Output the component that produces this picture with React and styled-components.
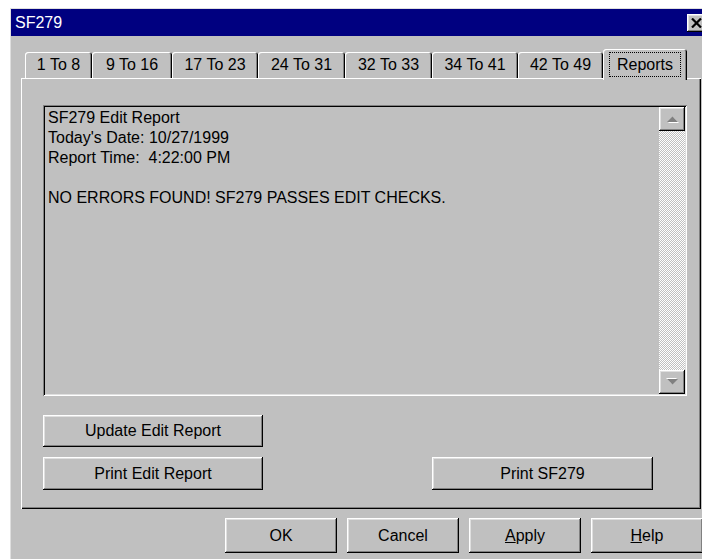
import React from 'react';
import styled, { createGlobalStyle } from 'styled-components';

const GlobalStyle = createGlobalStyle`
  html, body {
    margin: 0;
    padding: 0;
    background: #fff;
    overflow: hidden;
  }
  body {
    font-family: 'Liberation Sans', Arial, sans-serif;
    font-size: 16px;
    color: #000;
  }
`;

const raised = `
  box-shadow:
    inset -1px -1px #000,
    inset 1px 1px #fff,
    inset -2px -2px #808080,
    inset 2px 2px #dfdfdf;
`;

const sunken = `
  box-shadow:
    inset 1px 1px #808080,
    inset -1px -1px #fff,
    inset 2px 2px #000,
    inset -2px -2px #dfdfdf;
`;

const Window = styled.div`
  margin: 8px 0 0 10px;
  width: 694px;
  height: 560px;
  background: #c0c0c0;
  border-top: 1px solid #dfdfdf;
  border-left: 1px solid #dfdfdf;
  display: flex;
  flex-direction: column;
`;

const TitleBar = styled.div`
  height: 27px;
  background: #000080;
  color: #fff;
  display: flex;
  align-items: center;
  justify-content: space-between;
  padding-left: 4px;
  font-size: 16px;
`;

const CloseButton = styled.div`
  width: 18px;
  height: 18px;
  background: #c0c0c0;
  ${raised}
  display: flex;
  align-items: center;
  justify-content: center;
  margin-top: 1px;
`;

const Content = styled.div`
  padding: 13px 0 0 10px;
  display: flex;
  flex-direction: column;
`;

const TabStrip = styled.div`
  display: flex;
  align-items: flex-end;
  height: 29px;
  padding-left: 4px;
`;

const Tab = styled.div`
  position: relative;
  z-index: ${p => (p.$active ? 2 : 0)};
  width: ${p => p.$w}px;
  height: ${p => (p.$active ? 31 : 26)}px;
  margin-bottom: ${p => (p.$active ? -2 : 0)}px;
  box-sizing: border-box;
  background: #c0c0c0;
  border-radius: 3px 3px 0 0;
  box-shadow:
    inset 1px 1px #fff,
    inset -1px 0 #000,
    inset -2px 0 #808080;
  display: flex;
  align-items: ${p => (p.$active ? 'flex-start' : 'center')};
  justify-content: center;
  padding-top: ${p => (p.$active ? 3 : 0)}px;
  white-space: nowrap;
`;

const FocusLabel = styled.span`
  border: 1px dotted #000;
  padding: 2px 7px 2px 7px;
  line-height: 19px;
`;

const Panel = styled.div`
  width: 680px;
  height: 431px;
  box-sizing: border-box;
  padding: 27px 0 0 22px;
  box-shadow:
    inset 1px 1px #fff,
    inset -1px -1px #000,
    inset -2px -2px #808080;
  display: flex;
  flex-direction: column;
`;

const ReportBox = styled.div`
  width: 644px;
  height: 291px;
  box-sizing: border-box;
  ${sunken}
  display: flex;
  padding: 2px;
`;

const ReportText = styled.div`
  flex: 1;
  padding: 1px 3px;
  line-height: 20px;
  white-space: pre;
`;

const ScrollBar = styled.div`
  width: 26px;
  display: flex;
  flex-direction: column;
  background: repeating-conic-gradient(#c0c0c0 0 25%, #fff 0 50%) 0 0 / 2px 2px;
`;

const ScrollTrack = styled.div`
  flex: 1;
`;

const ScrollButton = styled.div`
  height: 24px;
  background: #c0c0c0;
  ${raised}
  display: flex;
  align-items: center;
  justify-content: center;
`;

const ButtonRow = styled.div`
  display: flex;
  gap: ${p => p.$gap || 0}px;
  margin-top: ${p => p.$top}px;
  padding-left: ${p => p.$left || 0}px;
`;

const Button = styled.div`
  width: ${p => p.$w}px;
  height: ${p => p.$h}px;
  box-sizing: border-box;
  background: #c0c0c0;
  ${raised}
  display: flex;
  align-items: center;
  justify-content: center;
  white-space: nowrap;
`;

// greyed-out scroll arrow with its white shadow
function Arrow({ down }) {
  return (
    <svg width="13" height="8" viewBox="0 0 13 8">
      <g transform={down ? 'rotate(180 6.5 4)' : undefined}>
        <path d="M1 7 L12 7 L6.5 1.5 Z" fill="#fff" transform="translate(1 1)" />
        <path d="M1 7 L12 7 L6.5 1.5 Z" fill="#808080" />
      </g>
    </svg>
  );
}

const tabs = [
  ['1 To 8', 67],
  ['9 To 16', 80],
  ['17 To 23', 86],
  ['24 To 31', 87],
  ['32 To 33', 87],
  ['34 To 41', 86],
  ['42 To 49', 85],
];

const report = `SF279 Edit Report
Today's Date: 10/27/1999
Report Time:  4:22:00 PM

NO ERRORS FOUND! SF279 PASSES EDIT CHECKS.`;

export default function App() {
  return (
    <>
      <GlobalStyle />
      <Window>
        <TitleBar>
          <span>SF279</span>
          <CloseButton>
            <svg width="11" height="10" viewBox="0 0 11 10">
              <path d="M1 0.5 L10 9.5 M10 0.5 L1 9.5" stroke="#000" strokeWidth="2.2" />
            </svg>
          </CloseButton>
        </TitleBar>
        <Content>
          <TabStrip>
            {tabs.map(([label, w]) => (
              <Tab key={label} $w={w}>{label}</Tab>
            ))}
            <Tab $active $w={84}>
              <FocusLabel>Reports</FocusLabel>
            </Tab>
          </TabStrip>
          <Panel>
            <ReportBox>
              <ReportText>{report}</ReportText>
              <ScrollBar>
                <ScrollButton><Arrow /></ScrollButton>
                <ScrollTrack />
                <ScrollButton><Arrow down /></ScrollButton>
              </ScrollBar>
            </ReportBox>
            <ButtonRow $top={19}>
              <Button $w={220} $h={32}>Update Edit Report</Button>
            </ButtonRow>
            <ButtonRow $top={10} $gap={169}>
              <Button $w={220} $h={33}>Print Edit Report</Button>
              <Button $w={221} $h={33}>Print SF279</Button>
            </ButtonRow>
          </Panel>
          <ButtonRow $top={9} $left={204} $gap={10}>
            <Button $w={112} $h={35}>OK</Button>
            <Button $w={112} $h={35}>Cancel</Button>
            <Button $w={112} $h={35}><span><u>A</u>pply</span></Button>
            <Button $w={112} $h={35}><span><u>H</u>elp</span></Button>
          </ButtonRow>
        </Content>
      </Window>
    </>
  );
}
